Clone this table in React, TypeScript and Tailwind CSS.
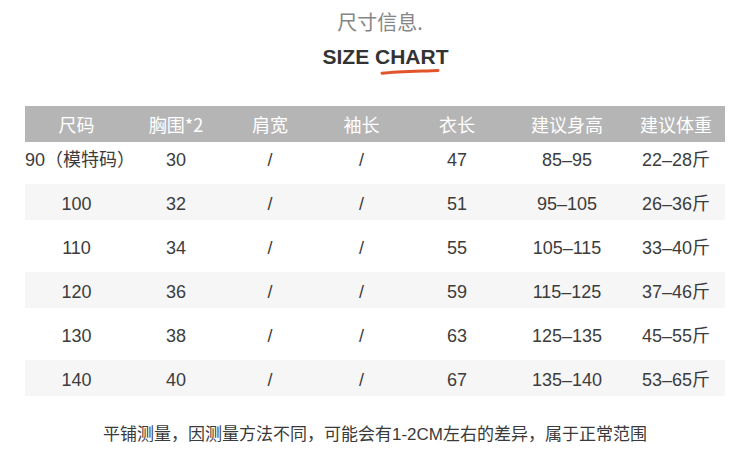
const headers = ["尺码", "胸围*2", "肩宽", "袖长", "衣长", "建议身高", "建议体重"];

const rows = [
  ["90（模特码）", "30", "/", "/", "47", "85–95", "22–28斤"],
  ["100", "32", "/", "/", "51", "95–105", "26–36斤"],
  ["110", "34", "/", "/", "55", "105–115", "33–40斤"],
  ["120", "36", "/", "/", "59", "115–125", "37–46斤"],
  ["130", "38", "/", "/", "63", "125–135", "45–55斤"],
  ["140", "40", "/", "/", "67", "135–140", "53–65斤"],
];

const cols = "grid grid-cols-[103px_96px_92px_91px_100px_120px_98px]";

function Cells({ cells }: { cells: string[] }) {
  return (
    <>
      {cells.map((c, i) => (
        <div key={i} className="text-center whitespace-nowrap">
          {c}
        </div>
      ))}
    </>
  );
}

export default function App() {
  return (
    <div className="w-[750px] h-[469px] bg-white flex flex-col items-center font-['Liberation_Sans','Noto_Sans_CJK_SC',sans-serif] text-[#3c3c3c]">
      <div className="pt-[10px] ml-[10px] text-[20px] leading-[24px] text-[#858585] font-['Noto_Sans_CJK_SC',sans-serif]">
        尺寸信息.
      </div>
      <div className="mt-[11px] ml-[21px] text-[21px] leading-[24px] font-bold text-[#333]">
        SIZE{" "}
        <span className="relative">
          CHART
          <svg
            className="absolute left-[5px] top-[23px]"
            width="62"
            height="8"
            viewBox="0 0 62 8"
          >
            <path
              d="M2 5.2 C 18 3.6, 40 3.2, 58 2.4"
              stroke="#e2552c"
              strokeWidth="3"
              strokeLinecap="round"
              fill="none"
            />
          </svg>
        </span>
      </div>

      <div className="mt-[37px] w-[700px] text-[18px]">
        <div className={`${cols} h-[36px] items-center bg-[#b5b5b5] text-white font-['Noto_Sans_CJK_SC',sans-serif]`}>
          <Cells cells={headers} />
        </div>
        {rows.map((r, i) =>
          i === 0 ? (
            <div key={i} className={`${cols} h-[40px] items-center pb-[4px]`}>
              <Cells cells={r} />
            </div>
          ) : (
            <div key={i} className="h-[44px] pt-[2px]">
              <div
                className={`${cols} h-[36px] items-center pt-[4px] ${
                  i % 2 === 1 ? "bg-[#f6f6f6]" : ""
                }`}
              >
                <Cells cells={r} />
              </div>
            </div>
          )
        )}
      </div>

      <div className="mt-[21px] text-[17px] leading-[24px] text-[#3a3a3a]">
        平铺测量，因测量方法不同，可能会有1-2CM左右的差异，属于正常范围
      </div>
    </div>
  );
}
